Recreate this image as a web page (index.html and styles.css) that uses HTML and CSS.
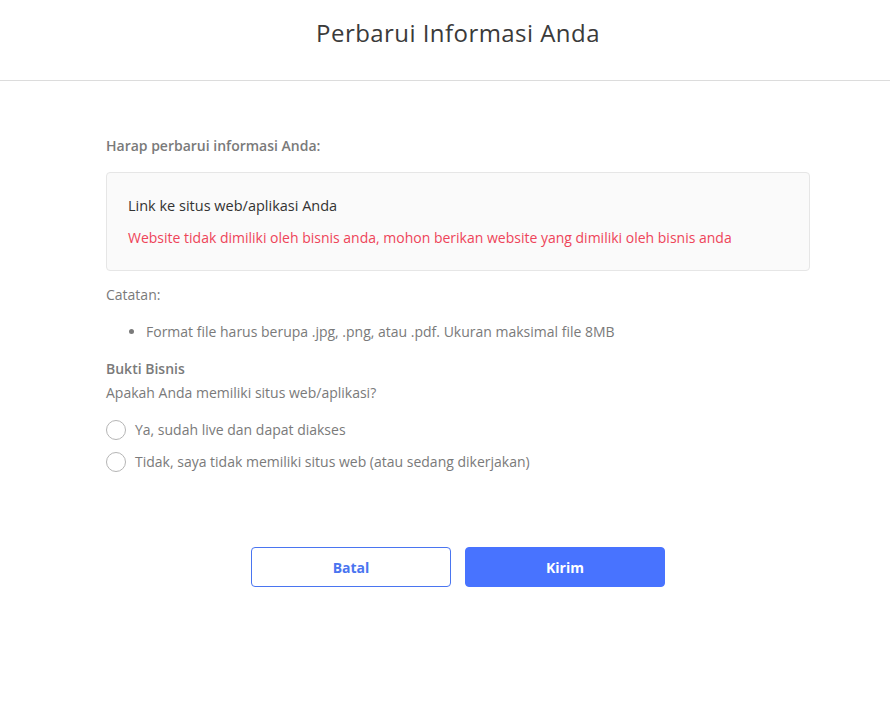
FILE: index.html
```html
<!DOCTYPE html>
<html lang="id">
<head>
<meta charset="utf-8">
<title>Perbarui Informasi Anda</title>
<link rel="stylesheet" href="styles.css">
</head>
<body>
<header class="header">
  <h1 class="title">Perbarui Informasi Anda</h1>
</header>
<main class="content">
  <p class="lead">Harap perbarui informasi Anda:</p>
  <div class="notice">
    <p class="notice-title">Link ke situs web/aplikasi Anda</p>
    <p class="notice-error">Website tidak dimiliki oleh bisnis anda, mohon berikan website yang dimiliki oleh bisnis anda</p>
  </div>
  <p class="note">Catatan:</p>
  <ul class="note-list">
    <li>Format file harus berupa .jpg, .png, atau .pdf. Ukuran maksimal file 8MB</li>
  </ul>
  <p class="section-title">Bukti Bisnis</p>
  <p class="question">Apakah Anda memiliki situs web/aplikasi?</p>
  <div class="options">
    <label class="option"><span class="radio"></span><span>Ya, sudah live dan dapat diakses</span></label>
    <label class="option"><span class="radio"></span><span>Tidak, saya tidak memiliki situs web (atau sedang dikerjakan)</span></label>
  </div>
  <div class="actions">
    <button class="btn btn-outline" type="button">Batal</button>
    <button class="btn btn-primary" type="button">Kirim</button>
  </div>
</main>
</body>
</html>
```
FILE: styles.css
```css
* { box-sizing: border-box; }
html, body { margin: 0; padding: 0; background: #fff; }
body {
  font-family: "Open Sans", "Noto Sans", sans-serif;
  font-size: 14px;
  line-height: 20px;
  color: #777;
  width: 890px;
}
p { margin: 0; }
.header {
  height: 81px;
  border-bottom: 1px solid #dcdcdc;
  display: flex;
  justify-content: center;
  padding-left: 26px;
}
.title {
  margin: 17px 0 0;
  font-size: 24px;
  line-height: 32px;
  font-weight: 400;
  color: #3a3a3a;
  letter-spacing: 0.45px;
}
.content {
  margin-left: 106px;
  width: 704px;
  padding-top: 55px;
  display: flex;
  flex-direction: column;
}
.lead { font-weight: 600; color: #7a7a7a; }
.notice {
  margin-top: 16px;
  background: #fafafa;
  border: 1px solid #e6e6e6;
  border-radius: 4px;
  padding: 23px 21px 22px;
  display: flex;
  flex-direction: column;
  gap: 12px;
}
.notice-title { color: #333; font-size: 14.5px; font-weight: 500; }
.notice-error { color: #ee4459; }
.note { margin-top: 14px; color: #7a7a7a; }
.note-list {
  margin: 17px 0 0;
  padding-left: 40px;
  color: #7a7a7a;
}
.section-title { margin-top: 17px; font-weight: 600; color: #7a7a7a; }
.question { margin-top: 4px; color: #7a7a7a; }
.options {
  margin-top: 17px;
  display: flex;
  flex-direction: column;
  gap: 12px;
}
.option {
  display: flex;
  align-items: center;
  gap: 9px;
  color: #7a7a7a;
  cursor: pointer;
}
.radio {
  width: 20px;
  height: 20px;
  border: 1px solid #b5b5b5;
  border-radius: 50%;
  background: #fff;
  flex: none;
}
.actions {
  margin-top: 75px;
  display: flex;
  justify-content: center;
  gap: 14px;
}
.btn {
  width: 200px;
  height: 40px;
  border-radius: 4px;
  font-family: inherit;
  font-size: 14px;
  font-weight: 700;
  cursor: pointer;
}
.btn-outline {
  background: #fff;
  color: #4a75f0;
  border: 1px solid #4a75f0;
}
.btn-primary {
  background: #4873ff;
  color: #fff;
  border: 1px solid #4873ff;
}
```
